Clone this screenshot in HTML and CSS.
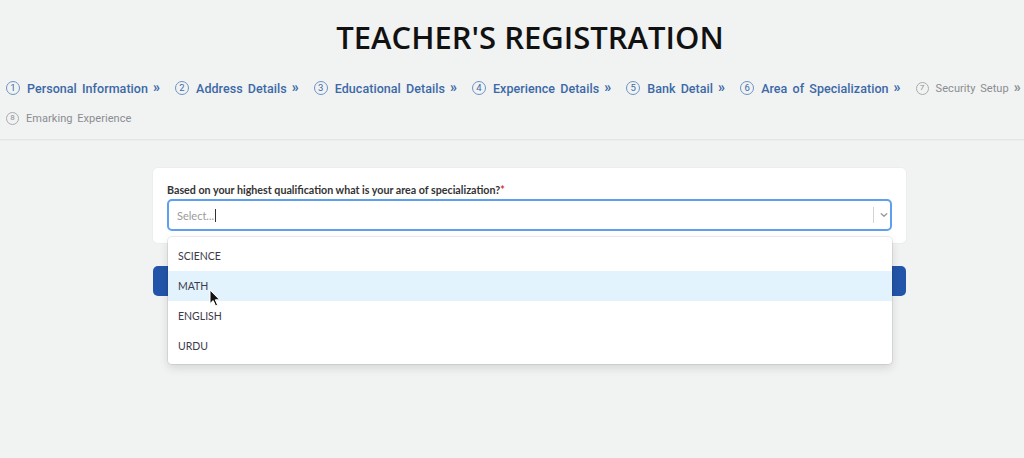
FILE: index.html
```html
<!DOCTYPE html>
<html lang="en">
<head>
<meta charset="utf-8">
<title>Teacher's Registration</title>
<link rel="stylesheet" href="styles.css">
</head>
<body>
<header class="header">
  <h1 class="title">TEACHER'S REGISTRATION</h1>
  <ol class="steps">
    <li class="step"><span class="num">1</span><span class="label">Personal Information</span><span class="sep">»</span></li>
    <li class="step"><span class="num">2</span><span class="label">Address Details</span><span class="sep">»</span></li>
    <li class="step"><span class="num">3</span><span class="label">Educational Details</span><span class="sep">»</span></li>
    <li class="step"><span class="num">4</span><span class="label">Experience Details</span><span class="sep">»</span></li>
    <li class="step"><span class="num">5</span><span class="label">Bank Detail</span><span class="sep">»</span></li>
    <li class="step"><span class="num">6</span><span class="label">Area of Specialization</span><span class="sep">»</span></li>
    <li class="step step-off"><span class="num">7</span><span class="label">Security Setup</span><span class="sep">»</span></li>
    <li class="step step-off"><span class="num">8</span><span class="label">Emarking Experience</span></li>
  </ol>
</header>
<main class="main">
  <section class="card">
    <label class="field-label">Based on your highest qualification what is your area of specialization?<span class="req">*</span></label>
    <div class="select">
      <div class="select-value"><span class="placeholder">Select...</span><span class="caret"></span></div>
      <div class="indicators">
        <span class="ind-sep"></span>
        <svg class="chevron" width="10" height="10" viewBox="0 0 20 20"><path d="M4.5 7.5 L10 12.5 L15.5 7.5" fill="none" stroke="#999" stroke-width="2.6" stroke-linecap="round" stroke-linejoin="round"/></svg>
      </div>
      <ul class="menu">
        <li class="option">SCIENCE</li>
        <li class="option option-focus">MATH
          <svg class="cursor" width="12" height="18" viewBox="0 0 12 18"><path d="M1 1 L1 14.5 L4.2 11.6 L6.6 17 L8.6 16.1 L6.3 10.8 L10.6 10.8 Z" fill="#111" stroke="#fff" stroke-width="1" stroke-linejoin="round"/></svg>
        </li>
        <li class="option">ENGLISH</li>
        <li class="option">URDU</li>
      </ul>
    </div>
  </section>
  <button class="next-btn" type="button"></button>
</main>
</body>
</html>
```

FILE: styles.css
```css
* { box-sizing: border-box; }
html, body { margin: 0; padding: 0; }
body {
  background: #f1f2f2;
  font-family: "Lato", "Open Sans", sans-serif;
  width: 1024px;
  height: 458px;
  overflow: hidden;
}
.header {
  padding-top: 17px;
  padding-bottom: 6px;
  border-bottom: 1px solid #e4e6e6;
  box-shadow: 0 1px 1px rgba(0,0,0,0.02);
}
.title {
  margin: 0;
  padding-left: 36px;
  text-align: center;
  font-family: "Open Sans", sans-serif;
  font-weight: 600;
  font-size: 31px;
  line-height: 40px;
  color: #111;
}
.steps {
  list-style: none;
  margin: 16px 0 0;
  padding: 0 0 0 6px;
  display: flex;
  flex-wrap: wrap;
  column-gap: 15px;
}
.step {
  display: flex;
  align-items: center;
  height: 30px;
  color: #3b69a6;
  font-family: "Roboto", sans-serif;
  font-size: 12.5px;
  font-weight: 500;
  word-spacing: 2px;
  letter-spacing: 0.05px;
}
.num {
  width: 14px;
  height: 14px;
  border: 1px solid #6e93c4;
  border-radius: 50%;
  font-size: 9.5px;
  font-weight: 400;
  display: flex;
  align-items: center;
  justify-content: center;
  margin-right: 7px;
  line-height: 1;
}
.sep {
  margin-left: 5px;
  font-size: 14px;
  font-weight: 700;
  line-height: 1;
  margin-top: -2px;
}
.step-off {
  color: #8a8d90;
  font-size: 11px;
  font-weight: 400;
}
.step-off .num {
  border-color: #a9acae;
  font-size: 8px;
  width: 13px;
  height: 13px;
}
.main {
  margin: 28px 0 0 153px;
  width: 753px;
}
.card {
  background: #fff;
  border-radius: 5px;
  padding: 15px 14px 12px;
  box-shadow: 0 0 0 1px rgba(0,0,0,0.02);
}
.field-label {
  display: block;
  font-size: 10.7px;
  font-weight: 700;
  color: #333;
  line-height: 14px;
  margin-bottom: 2px;
}
.req { color: #d03030; }
.select {
  position: relative;
  height: 32px;
  border: 2px solid #5e9fee;
  border-radius: 5px;
  display: flex;
  align-items: center;
}
.select-value {
  flex: 1;
  padding-left: 8px;
  display: flex;
  align-items: center;
}
.placeholder {
  font-size: 11px;
  color: #9a9a9a;
}
.caret {
  width: 1px;
  height: 13px;
  background: #333;
  margin-left: 1px;
}
.indicators {
  display: flex;
  align-items: center;
  height: 100%;
}
.ind-sep {
  width: 1px;
  height: 16px;
  background: #d4d4d4;
}
.chevron {
  margin: 0 1px 0 5px;
}
.menu {
  position: absolute;
  top: 36px;
  left: -1px;
  right: -2px;
  margin: 0;
  padding: 4px 0 3px;
  list-style: none;
  background: #fff;
  border-radius: 4px;
  box-shadow: 0 0 0 1px rgba(0,0,0,0.07), 0 4px 10px rgba(0,0,0,0.12);
  z-index: 5;
}
.option {
  position: relative;
  height: 30px;
  line-height: 30px;
  padding-left: 10px;
  font-size: 10.5px;
  color: #3b3b4a;
}
.option-focus { background: #e3f3fd; }
.cursor {
  position: absolute;
  left: 41px;
  top: 18px;
}
.next-btn {
  display: block;
  width: 100%;
  height: 30px;
  margin-top: 23px;
  border: 0;
  border-radius: 5px;
  background: #2255a9;
}
```
